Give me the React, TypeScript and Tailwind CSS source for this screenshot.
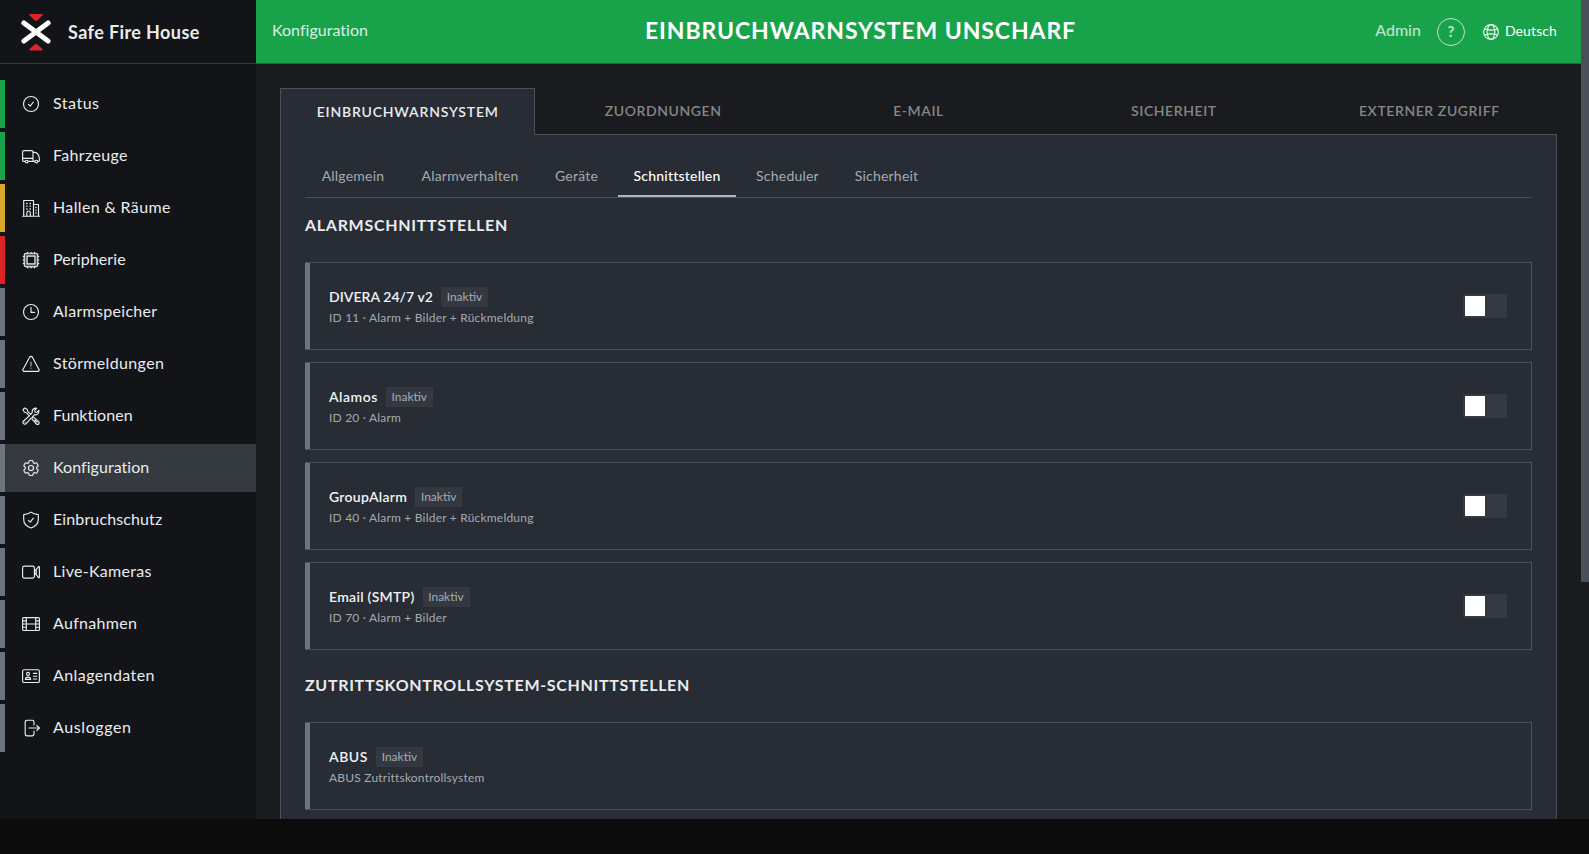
import type { ReactNode } from "react";
import { HiOutlineCog6Tooth } from "react-icons/hi2";

function Icon({ children }: { children: ReactNode }) {
  return (
    <svg
      aria-hidden="true"
      viewBox="0 0 18 18"
      className="h-[18px] w-[18px] shrink-0"
      fill="none"
      stroke="currentColor"
      strokeWidth="1.15"
      strokeLinecap="round"
      strokeLinejoin="round"
    >
      {children}
    </svg>
  );
}

function Logo() {
  return (
    <svg aria-hidden="true" viewBox="0 0 30 37" className="h-[37px] w-[30px] shrink-0" fill="none">
      <path d="M9.2 0h11.6q1.6.3.6 1.6l-5 4.6q-1.4 1-2.8 0l-5-4.6Q7.6.3 9.2 0Z" fill="#dc2626" />
      <path d="M9.2 36.6h11.6q1.6-.3.6-1.6l-5-4.6q-1.4-1-2.8 0l-5 4.6q-1 1.3.6 1.6Z" fill="#dc2626" />
      <path d="M2.9 9 27.1 27M27.1 9 2.9 27" stroke="#fff" strokeWidth="5" strokeLinecap="round" />
    </svg>
  );
}

const icons: Record<string, ReactNode> = {
  status: (
    <Icon>
      <circle cx="9" cy="9" r="7.5" />
      <path d="M6.5 9.4l1.7 1.8 3.2-4.2" />
    </Icon>
  ),
  truck: (
    <Icon>
      <path d="M3.2 14.4H1.6a1 1 0 0 1-1-1V5A1.4 1.4 0 0 1 2 3.600h7.600A1.400 1.400 0 0 1 11 5v9.400H6.200M.6 11.300H11M11 5.300h1.800c2.600 0 4.600 3.400 4.600 6.600v1.500a1 1 0 0 1-1 1h-.6M11 14.400h1.800" />
      <circle cx="4.7" cy="14.6" r="1.4" />
      <circle cx="14.3" cy="14.6" r="1.4" />
    </Icon>
  ),
  building: (
    <Icon>
      <path d="M.6 17.2h16.8M1.7 17V1.5h9.8V17M11.500 5.500h5V17" />
      <path d="M4.9 17v-3.300a1.700 1.700 0 0 1 3.400 0V17" />
      <path d="M4.7 4.500h.4M8 4.500h.4M4.700 7.200h.4M8 7.200h.4M4.700 10h.4M8 10h.4M13.900 8.500h.2M13.900 11.200h.2M13.900 14h.2" strokeWidth="1.3" />
    </Icon>
  ),
  cpu: (
    <Icon>
      <rect x="2.2" y="2.2" width="13.6" height="13.6" rx="2.2" fill="currentColor" fillOpacity=".3" />
      <rect x="5.1" y="5.1" width="7.8" height="7.8" fill="#131418" />
      <path d="M5.500 1.200v1M9 1.200v1M12.500 1.200v1M5.500 15.800v1M9 15.800v1M12.500 15.800v1M1.200 5.500h1M1.200 9h1M1.200 12.500h1M15.800 5.500h1M15.800 9h1M15.800 12.500h1" />
    </Icon>
  ),
  clock: (
    <Icon>
      <circle cx="9" cy="9" r="7.5" />
      <path d="M9 4.300v5.100h3.600" />
    </Icon>
  ),
  warning: (
    <Icon>
      <path d="M7.600 2.200 1 14.400a1.300 1.300 0 0 0 1.100 2h13.800a1.300 1.300 0 0 0 1.100-2L10.400 2.200a1.600 1.600 0 0 0-2.800 0Z" />
      <path d="M9 7v4M9 13v.2" opacity=".75" />
    </Icon>
  ),
  tools: (
    <Icon>
      <path d="M1 2.600 2.600 1l2.700 1.400.4 1.900 3 3M1 2.600l1.400 2.700 1.900.4 3 3M10.600 10.300l1-.2 5.100 4.600a1.500 1.500 0 0 1-2.300 2.300l-4.500-5.200.2-1" />
      <path d="M7.300 8.900 1.300 14.200a1.900 1.900 0 0 0 2.700 2.600l5.300-6M8.700 7.300l1.500-1.600C9.700 3 11.800.7 14.700 1.200l-2 2.100.3 1.700 1.800.3 2-2c.6 3-1.600 5.100-4.500 4.500l-1.800 2" />
      <path d="M12.800 13l2.200 2.200M3 15.200l.1-.1" />
    </Icon>
  ),
  gear: <HiOutlineCog6Tooth className="-m-px h-5 w-5 shrink-0" strokeWidth={1.4} />,
  shield: (
    <Icon>
      <path d="M9 1.100C7.300 2.500 4.500 3.400 1.700 3.600v5c0 4.300 3.500 7.200 7.300 8.400 3.800-1.200 7.300-4.100 7.300-8.400v-5C13.500 3.400 10.700 2.500 9 1.100Z" />
      <path d="M6.400 9.400l1.800 1.700 3.200-4" />
    </Icon>
  ),
  camera: (
    <Icon>
      <rect x=".6" y="3.1" width="11.8" height="12" rx="1.8" />
      <path d="M12.600 8.400 16.600 3.600q.8-.4.8.5v10q0 .9-.8.5L12.600 9.800M14.200 7.200v3.800" />
    </Icon>
  ),
  film: (
    <Icon>
      <rect x=".6" y="2.6" width="16.8" height="12.900" rx="1" />
      <path d="M4.300 2.600v12.900M13.700 2.600v12.900M.6 9h16.800M.6 5.800h3.700M.6 12.200h3.700M13.700 5.800h3.700M13.700 12.200h3.700" />
    </Icon>
  ),
  vcard: (
    <Icon>
      <rect x=".6" y="2.7" width="16.8" height="12.8" rx="1.6" />
      <circle cx="6" cy="6.9" r="1.5" />
      <path d="M3.400 12.400c0-3 5.200-3 5.200 0ZM11.400 6.400h3.400M11.400 9.200h3.400M11.400 12h3.400" />
    </Icon>
  ),
  logout: (
    <Icon>
      <path d="M12 6V3a1.800 1.800 0 0 0-1.800-1.800H5A1.800 1.800 0 0 0 3.200 3v12A1.800 1.800 0 0 0 5 16.800h5.200A1.800 1.800 0 0 0 12 15v-3M7 9h10.200M14.700 6.300 17.400 9l-2.700 2.700" />
    </Icon>
  ),
};

const navItems = [
  { label: "Status", icon: "status", bar: "bg-[#18a34a]", tracking: "tracking-[0.5px]" },
  { label: "Fahrzeuge", icon: "truck", bar: "bg-[#18a34a]", tracking: "tracking-[0.35px]" },
  { label: "Hallen & Räume", icon: "building", bar: "bg-[#d9a82b]", tracking: "tracking-[0.35px]" },
  { label: "Peripherie", icon: "cpu", bar: "bg-[#dc2328]", tracking: "tracking-[0.1px]" },
  { label: "Alarmspeicher", icon: "clock", bar: "bg-[#6c757d]", tracking: "tracking-[0.3px]" },
  { label: "Störmeldungen", icon: "warning", bar: "bg-[#6c757d]", tracking: "tracking-[0.35px]" },
  { label: "Funktionen", icon: "tools", bar: "bg-[#6c757d]", tracking: "tracking-[0.02px]" },
  { label: "Konfiguration", icon: "gear", bar: "bg-[#6c757d]", tracking: "tracking-[0.05px]", active: true },
  { label: "Einbruchschutz", icon: "shield", bar: "bg-[#6c757d]", tracking: "tracking-[0.12px]" },
  { label: "Live-Kameras", icon: "camera", bar: "bg-[#6c757d]", tracking: "tracking-[0.3px]" },
  { label: "Aufnahmen", icon: "film", bar: "bg-[#6c757d]", tracking: "tracking-[0.3px]" },
  { label: "Anlagendaten", icon: "vcard", bar: "bg-[#6c757d]", tracking: "tracking-[0.42px]" },
  { label: "Ausloggen", icon: "logout", bar: "bg-[#6c757d]", tracking: "tracking-[0.6px]" },
];

const tabs = ["ZUORDNUNGEN", "E-MAIL", "SICHERHEIT", "EXTERNER ZUGRIFF"];

const subTabs = [
  { label: "Allgemein", width: "w-[96px]" },
  { label: "Alarmverhalten", width: "w-[130px]" },
  { label: "Geräte", width: "w-[75px]" },
  { label: "Schnittstellen", width: "w-[118px]", active: true },
  { label: "Scheduler", width: "w-[95px]" },
  { label: "Sicherheit", width: "w-[95px]" },
];

const alarmInterfaces = [
  { name: "DIVERA 24/7 v2", detail: "ID 11 · Alarm + Bilder + Rückmeldung", tracking: "tracking-[0.05px]" },
  { name: "Alamos", detail: "ID 20 · Alarm", tracking: "tracking-[0.5px]" },
  { name: "GroupAlarm", detail: "ID 40 · Alarm + Bilder + Rückmeldung", tracking: "tracking-[0.28px]" },
  { name: "Email (SMTP)", detail: "ID 70 · Alarm + Bilder", tracking: "tracking-[0.28px]" },
];

function Toggle() {
  return (
    <button type="button" role="switch" aria-checked="false" className="flex h-6 w-11 items-center bg-[#343840] p-0.5">
      <span className="h-5 w-5 bg-white" />
    </button>
  );
}

type CardProps = { name: string; detail: string; tracking: string; toggle?: boolean };

function InterfaceCard({ name, detail, tracking, toggle }: CardProps) {
  return (
    <div className="flex h-[88px] items-center justify-between border border-l-0 border-[#495057] pr-6">
      <div className="flex h-full">
        <div className="h-full w-[5px] bg-[#6c757d]" />
        <div className="pt-6 pl-[19px]">
          <div className="flex items-center gap-2">
            <span className={`text-sm leading-5 font-semibold text-[#f1f3f5] ${tracking}`}>{name}</span>
            <span className="h-5 w-[47px] bg-[#343840] text-center text-xs leading-5 text-[#a4abb2]">Inaktiv</span>
          </div>
          <div className="mt-0.5 text-xs leading-[18px] tracking-[0.2px] text-[#a4abb2]">{detail}</div>
        </div>
      </div>
      {toggle ? <Toggle /> : null}
    </div>
  );
}

export default function App() {
  return (
    <div className="h-[854px] w-[1589px] overflow-hidden bg-[#0c0c0c] font-['Lato','Open_Sans',sans-serif] text-[#e9ecef]">
      <div className="flex h-[819px] overflow-hidden bg-[#1a1b1e]">
        {/* SIDEBAR */}
        <aside className="w-64 shrink-0 bg-[#131418]">
          <div className="flex h-16 items-center gap-[17px] border-b border-[#393a3d] pt-px pl-[21px]">
            <Logo />
            <span className="text-[18px] font-bold tracking-[0.4px]">Safe Fire House</span>
          </div>
          <nav className="mt-4 flex flex-col gap-1">
            {navItems.map((item) => (
              <a key={item.label} className={`flex h-12 items-center ${item.active ? "bg-[#343a40]" : ""}`}>
                <span className={`h-full w-[5px] ${item.bar}`} />
                <span className="ml-[17px] flex">{icons[item.icon]}</span>
                <span className={`ml-[13px] pb-0.5 text-base ${item.tracking}`}>{item.label}</span>
              </a>
            ))}
          </nav>
        </aside>

        {/* MAIN */}
        <div className="flex w-[1325px] shrink-0 flex-col">
          <header className="flex h-16 shrink-0 items-center border-b border-[#3d5a50] bg-[#18a34a] pr-6 pl-4">
            <span className="pb-[3px] text-base tracking-[0.02px] text-[#dcefe3]">Konfiguration</span>
            <h1 className="ml-[277px] pb-[3px] text-[23px] font-bold tracking-[0.9px] text-white">
              EINBRUCHWARNSYSTEM UNSCHARF
            </h1>
            <div className="ml-auto flex items-center">
              <span className="pb-[3px] text-base font-medium text-[#bfe4cc]">Admin</span>
              <span className="ml-4 flex h-7 w-7 items-center justify-center rounded-full border border-[#bfe4cc] pb-px text-[15px] font-bold text-[#bfe4cc]">
                ?
              </span>
              <svg
                aria-hidden="true"
                viewBox="0 0 16 16"
                className="ml-[18px] h-4 w-4"
                fill="none"
                stroke="#eef8f1"
                strokeWidth="1.1"
              >
                <circle cx="8" cy="8" r="7.4" />
                <ellipse cx="8" cy="8" rx="3.8" ry="7.4" />
                <path d="M1.400 5c3.500 1.500 9.700 1.500 13.200 0M1.400 11c3.500-1.500 9.700-1.500 13.200 0" />
              </svg>
              <span className="ml-1.5 pb-px text-sm tracking-[0.1px] text-white">Deutsch</span>
            </div>
          </header>

          <main className="flex min-h-0 flex-1 flex-col px-6 pt-6">
            <div className="grid h-[47px] shrink-0 grid-cols-5 text-sm font-semibold">
              <div className="z-10 flex items-center justify-center border border-b-0 border-[#495057] bg-[#282c34] tracking-[0.8px]">
                EINBRUCHWARNSYSTEM
              </div>
              {tabs.map((tab) => (
                <div
                  key={tab}
                  className="flex items-center justify-center border-b border-[#495057] tracking-[0.57px] text-[#868686]"
                >
                  {tab}
                </div>
              ))}
            </div>

            <section className="flex-1 border-x border-[#495057] bg-[#282c34] px-6 pt-[21px]">
              <div className="flex h-[42px] gap-1 border-b border-[#495057]">
                {subTabs.map((tab) => (
                  <div
                    key={tab.label}
                    className={`flex items-center justify-center border-b-2 text-sm tracking-[0.22px] ${tab.width} ${
                      tab.active ? "border-[#adb5bd] font-medium text-white" : "border-transparent text-[#a4abb2]"
                    }`}
                  >
                    {tab.label}
                  </div>
                ))}
              </div>

              <h2 className="mt-[15px] text-base leading-6 font-bold tracking-[0.7px]">ALARMSCHNITTSTELLEN</h2>
              <div className="mt-[25px] flex flex-col gap-3">
                {alarmInterfaces.map((item) => (
                  <InterfaceCard key={item.name} {...item} toggle />
                ))}
              </div>

              <h2 className="mt-[23px] text-base leading-6 font-bold tracking-[0.68px]">
                ZUTRITTSKONTROLLSYSTEM-SCHNITTSTELLEN
              </h2>
              <div className="mt-[25px]">
                <InterfaceCard name="ABUS" detail="ABUS Zutrittskontrollsystem" tracking="tracking-[0.55px]" />
              </div>
            </section>
          </main>
        </div>

        {/* SCROLLBAR */}
        <div className="w-2 shrink-0">
          <div className="h-[582px] bg-[#495057]" />
        </div>
      </div>
    </div>
  );
}
